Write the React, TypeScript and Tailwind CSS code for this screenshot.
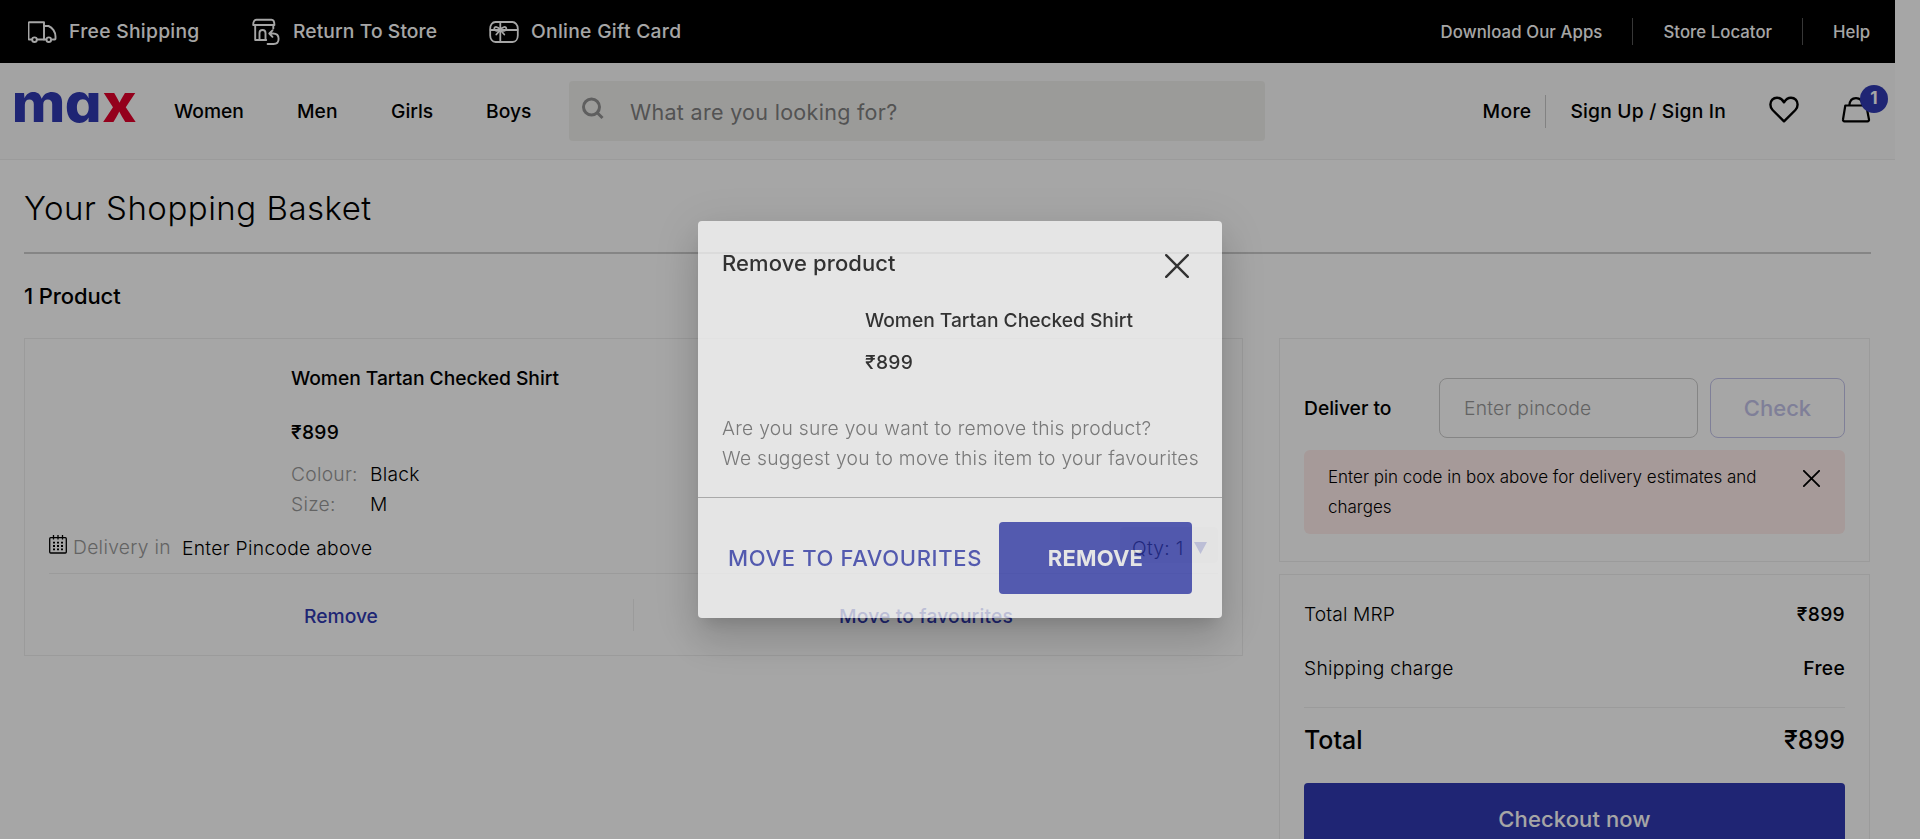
import React from "react";

function TruckIcon() {
  return (
    <svg width="30" height="24" viewBox="0 0 30 24" fill="none" stroke="white" strokeWidth="1.9" strokeLinejoin="round" strokeLinecap="round">
      <path d="M4 19.500H1.300a.8.8 0 0 1-.8-.8V3a.8.8 0 0 1 .8-.8H16v17.300H9" />
      <path d="M16 6h4.500c4 1.500 7 6 7 10.500v2.200a.8.8 0 0 1-.8.8h-2.200M16 19.500h2" />
      <circle cx="6.500" cy="19.700" r="2.300" />
      <circle cx="20.800" cy="19.700" r="2.300" />
    </svg>
  );
}

function StoreIcon() {
  return (
    <svg width="30" height="28" viewBox="0 0 30 28" fill="none" stroke="white" strokeWidth="1.9" strokeLinejoin="round" strokeLinecap="round">
      <path d="M4.500 1.700h15c1.800 0 2.900 2 2.900 5.300H1.200c0-3.300 1.500-5.300 3.300-5.300Z" />
      <path d="M3.200 7v15h11M21.300 7v3.500" />
      <path d="M7.500 22v-7a3 3 0 0 1 6 0v7" />
      <path d="M20.500 12.300l-3.200 3.200 3.200 3.300M17.500 15.500h3.500c3.500 0 5.600 2 5.600 5.200s-2 5.300-5 5.300h-6" />
    </svg>
  );
}

function GiftIcon() {
  return (
    <svg width="30" height="24" viewBox="0 0 30 24" fill="none" stroke="white" strokeWidth="1.8" strokeLinejoin="round" strokeLinecap="round">
      <path d="M6.500 2h17c2.500 0 5.300 3 5.300 6.500v7c0 3.500-2 6.500-5.300 6.500h-17C3.200 22 1.200 19 1.200 15.500v-7C1.200 5 3.200 2 6.500 2Z" />
      <path d="M11.300 2v20M1.500 10h27" />
      <path d="M11.300 10c-2-3.500-6-4-6-1.300 0 2.500 4 2.500 6 1.300Zm0 0c2-3.500 6-4 6-1.300 0 2.500-4 2.500-6 1.300Z" />
      <path d="M11.300 10l-4 4.500M11.300 10l4 4.500" />
    </svg>
  );
}

function SearchIcon() {
  return (
    <svg width="24" height="24" viewBox="0 0 24 24" fill="none" stroke="#929292" strokeWidth="3">
      <circle cx="10.500" cy="10" r="8" />
      <path d="M16 15.500l5.500 5.500" />
    </svg>
  );
}

function HeartIcon() {
  return (
    <svg width="30" height="27" viewBox="0 0 30 27" fill="none" stroke="black" strokeWidth="2.4" strokeLinejoin="round">
      <path d="M15 25.300 3.600 14C1.800 12.200 1.400 10.300 1.400 8.600 1.400 4.700 4.200 1.700 8 1.700c3 0 5.200 1.500 7 4.600 1.800-3.100 4-4.600 7-4.600 3.800 0 6.600 3 6.600 6.900 0 1.700-.4 3.600-2.200 5.400Z" />
    </svg>
  );
}

function BagIcon() {
  return (
    <svg width="30" height="27" viewBox="0 0 30 27" fill="none" stroke="black" strokeWidth="2.200" strokeLinejoin="round">
      <path d="M4.300 9.500h21L28 23.500a1.500 1.500 0 0 1-1.500 1.800h-23A1.500 1.500 0 0 1 2 23.500Z" />
      <path d="M8.300 9.500C8.700 4.500 11 2.100 15 2.100s6.300 2.400 6.700 7.400" />
    </svg>
  );
}

function CalendarIcon() {
  return (
    <svg width="18" height="19" viewBox="0 0 18 19" fill="none" stroke="black" strokeWidth="1.3">
      <rect x=".7" y="2.700" width="16.600" height="15.300" rx="1" />
      <path d="M4.500 0v4.500M9 0v4.500M13.500 0v4.500" />
      <path d="M4 7.700h10M4 11h10M4 14.300h10" strokeWidth="1.800" strokeDasharray="2 2" />
    </svg>
  );
}

function Cross({ size, stroke }: { size: number; stroke: number }) {
  return (
    <svg width={size} height={size} viewBox="0 0 24 24" fill="none" stroke="black" strokeWidth={stroke} strokeLinecap="round">
      <path d="M1.200 1.200l21.600 21.600M22.800 1.200 1.200 22.800" />
    </svg>
  );
}

function TopBar() {
  return (
    <div className="flex h-[63px] items-center bg-black pl-7 pr-[25px] text-white">
      <div className="flex w-[224px] items-center gap-[11px] text-[19.25px] font-medium tracking-[0.3px]">
        <TruckIcon />
        Free Shipping
      </div>
      <div className="flex w-[237px] items-center gap-[11px] text-[19.25px] font-medium tracking-[0.1px]">
        <StoreIcon />
        Return To Store
      </div>
      <div className="flex items-center gap-[12px] text-[19.25px] font-medium tracking-[0.3px]">
        <GiftIcon />
        Online Gift Card
      </div>
      <div className="ml-auto flex items-center gap-[30px] text-[16.75px] font-medium">
        <span className="pt-[2px] tracking-[0.1px]">Download Our Apps</span>
        <span className="h-[27px] w-px bg-[#555]" />
        <span className="pt-[2px] tracking-[0.05px]">Store Locator</span>
        <span className="h-[27px] w-px bg-[#555]" />
        <span className="pt-[2px]">Help</span>
      </div>
    </div>
  );
}

function Header() {
  return (
    <div className="flex h-[97px] items-center border-b border-[#eee] bg-[#fafafa] text-[19.25px] font-medium">
      <div className="-mt-[16px] w-[174px] origin-left scale-x-[1.07] pl-[11px] text-[54px] leading-[60px] font-extrabold tracking-[-0.5px] text-[#303ab2] [font-feature-settings:'cv11']">
        ma<span className="ml-[1px] text-[#e4002b]">x</span>
      </div>
      <span className="w-[123px]">Women</span>
      <span className="w-[94px]">Men</span>
      <span className="w-[95px]">Girls</span>
      <span className="w-[83px]">Boys</span>
      <div className="flex h-[60px] w-[696px] items-center rounded bg-[#efefec] pl-3 text-[21.5px] font-normal tracking-[0.3px] text-[#808080]">
        <span className="-mt-1 mr-[25px]">
          <SearchIcon />
        </span>
        <span className="pt-[2px]">What are you looking for?</span>
      </div>
      <div className="ml-auto flex items-center pr-[7px]">
        <span className="mr-[14px] tracking-[0.3px]">More</span>
        <span className="h-[33px] w-px bg-[#c8c8c8]" />
        <span className="ml-6 mr-[43px] tracking-[0.2px]">Sign Up / Sign In</span>
        <span className="-mt-1">
          <HeartIcon />
        </span>
        <div className="relative -mt-1 ml-[42px] w-[47px]">
          <BagIcon />
          <span className="absolute -top-[11px] right-0 flex size-7 items-center justify-center rounded-full bg-[#303ab2] text-[17px] font-bold text-white">1</span>
        </div>
      </div>
    </div>
  );
}

function ProductCard() {
  return (
    <div className="flex h-[318px] w-[1219px] flex-col border border-[#eee] px-6 pt-6">
      <div className="pl-[242px] text-[19.25px] leading-[30px]">
        <div className="font-medium tracking-[-0.05px]">Women Tartan Checked Shirt</div>
        <div className="mt-6 font-medium tracking-[0.3px]">₹899</div>
        <div className="mt-3 flex tracking-[0.25px]">
          <span className="w-[79px] font-light text-[#999]">Colour:</span>
          <span className="font-light">Black</span>
        </div>
        <div className="flex tracking-[0.25px]">
          <span className="w-[79px] font-light text-[#999]">Size:</span>
          <span className="font-light">M</span>
        </div>
      </div>
      <div className="mt-[8px] flex h-[47px] items-start border-b border-[#eee] text-[19.25px] leading-[36px] font-light tracking-[0.3px]">
        <span className="mt-[8px] mr-[6px]">
          <CalendarIcon />
        </span>
        <span className="mt-[2px] mr-[11px] text-[#999]">Delivery in</span>
        <span className="mt-[3px]">Enter Pincode above</span>
        <div className="ml-auto flex h-9 w-[98px] items-center rounded bg-[#f5f5f5] pt-[5px] pl-3">
          <span className="w-[62px]">Qty: 1</span>
          <svg width="13" height="12" viewBox="0 0 13 12">
            <path d="M0 0h13L6.500 12Z" fill="#303ab2" />
          </svg>
        </div>
      </div>
      <div className="flex flex-1 items-center pt-px text-[19.25px] font-medium text-[#303ab2]">
        <span className="w-1/2 pt-[3px] text-center">Remove</span>
        <span className="h-8 w-px bg-[#eee]" />
        <span className="w-1/2 pt-[3px] text-center tracking-[0.15px]">Move to favourites</span>
      </div>
    </div>
  );
}

function Sidebar() {
  return (
    <div className="mr-px w-[591px]">
      <div className="h-[224px] border border-[#eee] px-[24px] pt-[39px]">
        <div className="flex items-center text-[19.25px]">
          <span className="w-[135px] font-medium">Deliver to</span>
          <div className="flex h-[60px] w-[259px] items-center rounded-lg border border-[#ccc] pl-[24px] font-light tracking-[0.25px] text-[#999]">Enter pincode</div>
          <div className="ml-3 flex h-[60px] flex-1 items-center justify-center rounded-lg border border-[#c4c4ea] text-[22px] font-medium text-[#c4c4ea]">Check</div>
        </div>
        <div className="mt-3 flex h-[84px] rounded-md bg-[#ffedeb] pt-[12px] pl-6">
          <span className="w-[475px] text-[17px] leading-[30px] font-light">
            Enter pin code in box above for delivery estimates and
            <br />
            charges
          </span>
          <span className="mt-[8px]">
            <Cross size={17} stroke={2.6} />
          </span>
        </div>
      </div>
      <div className="mt-3 h-[300px] border border-[#eee] px-[24px] pt-[24px] text-[19.25px] leading-[30px]">
        <div className="flex justify-between">
          <span className="font-light tracking-[0.1px]">Total MRP</span>
          <span className="font-medium tracking-[0.3px]">₹899</span>
        </div>
        <div className="mt-6 flex justify-between border-b border-[#eee] pb-[24px]">
          <span className="font-light tracking-[0.25px]">Shipping charge</span>
          <span className="font-medium tracking-[0.3px]">Free</span>
        </div>
        <div className="mt-[17px] flex justify-between text-[25px] font-medium">
          <span>Total</span>
          <span>₹899</span>
        </div>
        <div className="mt-[28px] flex h-[72px] items-center justify-center rounded bg-[#303ab2] text-[22px] font-medium tracking-[0.1px] text-white">Checkout now</div>
      </div>
    </div>
  );
}

function RemoveDialog() {
  return (
    <div className="h-[397px] w-[524px] rounded bg-white opacity-70 shadow-[0_11px_15px_-7px_rgba(0,0,0,0.2),0_24px_38px_3px_rgba(0,0,0,0.14),0_9px_46px_8px_rgba(0,0,0,0.12)]">
      <div className="h-[277px] border-b border-[#aaa] px-6 pt-[27px] leading-[30px]">
        <div className="flex items-start justify-between pr-[9px]">
          <span className="text-[22px] font-medium tracking-[0.1px]">Remove product</span>
          <span className="mt-[6px]">
            <Cross size={24} stroke={2.4} />
          </span>
        </div>
        <div className="mt-[27px] pl-[143px] text-[19.25px] font-medium tracking-[-0.05px]">Women Tartan Checked Shirt</div>
        <div className="mt-3 pl-[143px] text-[19.25px] font-medium tracking-[0.3px]">₹899</div>
        <div className="mt-[36px] text-[19.25px] font-light tracking-[0.28px] whitespace-nowrap text-[#666]">
          Are you sure you want to remove this product?
          <br />
          We suggest you to move this item to your favourites
        </div>
      </div>
      <div className="flex items-center justify-between pt-6 pr-[30px] pl-[30px] text-[22px]">
        <span className="font-medium tracking-[0.65px] whitespace-nowrap text-[#303ab2]">MOVE TO FAVOURITES</span>
        <span className="flex h-[72px] w-[193px] items-center justify-center rounded bg-[#303ab2] font-bold tracking-[0.2px] text-white">REMOVE</span>
      </div>
    </div>
  );
}

export default function App() {
  return (
    <div className="h-[839px] overflow-hidden bg-white font-['Inter','Liberation_Sans',sans-serif] text-black">
      <div className="w-[1895px]">
        <TopBar />
        <Header />
        <div className="w-[1871px] pl-6">
          <h1 className="border-b-2 border-[#ccc] pt-[24px] pb-[20px] text-[33px] leading-[48px] font-light tracking-[0.5px]">Your Shopping Basket</h1>
          <div className="my-[27px] text-[22px] leading-[30px] font-medium tracking-[-0.1px]">1 Product</div>
          <div className="flex items-start justify-between">
            <ProductCard />
            <Sidebar />
          </div>
        </div>
      </div>
      <div className="fixed inset-0 flex items-center justify-center bg-black/35">
        <RemoveDialog />
      </div>
    </div>
  );
}
